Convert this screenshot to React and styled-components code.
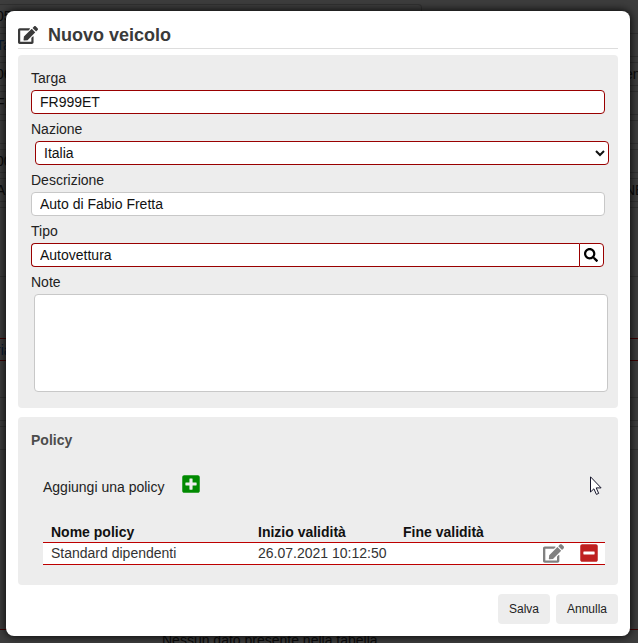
import styled, { createGlobalStyle, css } from "styled-components";
import { FaEdit, FaSearch, FaPlusSquare, FaMinusSquare } from "react-icons/fa";

const pageRows = [
  { height: 24, left: "05", short: true },
  { height: 24, left: "Ta", link: true },
  { height: 24, left: "06", right: "enti" },
  { height: 24, left: "FI" },
  { height: 24 },
  { height: 24, left: "00" },
  { height: 24, left: "AL", right: "NE" },
  { height: 70 },
  { height: 51, bare: true },
  { height: 23, left: "ria", link: true, required: true },
  { height: 26, bare: true },
  { height: 24 },
  { height: 24 },
  { height: 175, plain: true, required: true },
];

const policies = [
  { name: "Standard dipendenti", from: "26.07.2021 10:12:50", to: "" },
];

const Field = ({ label, children }) => (
  <FieldRow>
    <Label>{label}</Label>
    {children}
  </FieldRow>
);

const App = () => {
  const backgroundRows = pageRows.map((row, i) => (
    <PageRow
      key={i}
      $height={row.height}
      $plain={row.plain}
      $bare={row.bare}
      $short={row.short}
      $required={row.required}
      $link={row.link}
    >
      <span>{row.left}</span>
      <PageRight>{row.right}</PageRight>
    </PageRow>
  ));

  const policyRows = policies.map((item) => (
    <PolicyRow key={item.name}>
      <span>{item.name}</span>
      <span>{item.from}</span>
      <span>{item.to}</span>
      <Actions>
        <FaEdit size={21} color="#808080" />
        <FaMinusSquare size={20} color="#bf2020" />
      </Actions>
    </PolicyRow>
  ));

  return (
    <Screen>
      <GlobalStyle />
      <Page>
        {backgroundRows}
        <EmptyTable>Nessun dato presente nella tabella</EmptyTable>
      </Page>
      <Dialog>
        <Header>
          <FaEdit size={20} />
          <h1>Nuovo veicolo</h1>
        </Header>

        <Panel $height={353}>
          <Field label="Targa">
            <Input defaultValue="FR999ET" $required />
          </Field>
          <Field label="Nazione">
            <Select $required>
              <option>Italia</option>
            </Select>
          </Field>
          <Field label="Descrizione">
            <Input defaultValue="Auto di Fabio Fretta" />
          </Field>
          <Field label="Tipo">
            <SearchBox>
              <Input defaultValue="Autovettura" $required />
              <SearchButton>
                <FaSearch size={14} />
              </SearchButton>
            </SearchBox>
          </Field>
          <Field label="Note">
            <TextArea />
          </Field>
        </Panel>

        <Panel $height={168}>
          <h2>Policy</h2>
          <AddPolicy>
            <span>Aggiungi una policy</span>
            <FaPlusSquare size={20} color="#008a00" />
          </AddPolicy>
          <PolicyTable>
            <PolicyHead>
              <span>Nome policy</span>
              <span>Inizio validità</span>
              <span>Fine validità</span>
            </PolicyHead>
            {policyRows}
          </PolicyTable>
        </Panel>

        <Footer>
          <Button $width={52}>Salva</Button>
          <Button $width={62}>Annulla</Button>
        </Footer>
      </Dialog>
      <Cursor viewBox="0 0 12 19">
        <path d="M.5 .8V16l3.4-3.2 2.5 5.6 2.3-1-2.5-5.5h4.9z" fill="#fff" stroke="#15152a" />
      </Cursor>
    </Screen>
  );
};

export default App;

const GlobalStyle = createGlobalStyle`
  * {
    box-sizing: border-box;
  }

  body {
    margin: 0;
    overflow: hidden;
    background: #3d3d3d;
    font-family: "Liberation Sans", Arial, sans-serif;
    font-size: 14px;
  }
`;

const Screen = styled.div`
  display: flex;
  width: 638px;
  height: 643px;
  padding: 11px 8px 7px 6px;
  overflow: hidden;
`;

const Page = styled.div`
  position: absolute;
  inset: 0;
  display: flex;
  flex-direction: column;
  gap: 5px;
  padding-top: 4px;
  overflow: hidden;
  color: #0b0b0b;
`;

const PageRow = styled.div`
  display: flex;
  flex-shrink: 0;
  justify-content: space-between;
  width: ${(props) => (props.$short ? "426px" : "642px")};
  height: ${(props) => props.$height}px;
  margin-left: -4px;
  line-height: 22px;
  color: ${(props) => (props.$link ? "#071a33" : "#0b0b0b")};
  border: solid ${(props) => (props.$required ? "#3c0000" : "#313131")};
  border-width: ${(props) => (props.$bare ? "0" : props.$plain ? "0 0 1px" : "1px 0")};
  ${(props) => props.$short && "border-right-width: 1px; border-radius: 0 4px 4px 0;"}
`;

const PageRight = styled.span`
  width: 13px;
  color: #0b0b0b;
`;

const EmptyTable = styled.div`
  flex-shrink: 0;
  margin-top: -3px;
  padding-left: 162px;
  line-height: 17px;
`;

const Dialog = styled.div`
  position: relative;
  display: flex;
  flex-direction: column;
  width: 624px;
  height: 625px;
  padding: 12px;
  background: #fff;
  border-radius: 8px;
  box-shadow: 0 0 10px #000;
`;

const Header = styled.div`
  display: flex;
  align-items: center;
  gap: 10px;
  height: 26px;
  margin-bottom: 6px;
  padding-bottom: 2px;
  border-bottom: 1px solid #ddd;
  color: #3a3a3a;

  h1 {
    margin: 0;
    font-size: 18px;
    line-height: 22px;
  }
`;

const Panel = styled.div`
  flex-shrink: 0;
  height: ${(props) => props.$height}px;
  margin-bottom: 9px;
  padding: 13px;
  background: #ededed;
  border-radius: 4px;

  h2 {
    margin: 1px 0 0;
    font-size: 14px;
    line-height: 18px;
    color: #4c4c4c;
  }
`;

const FieldRow = styled.div`
  display: flex;
  flex-direction: column;
  height: 51px;
`;

const Label = styled.label`
  height: 22px;
  line-height: 20px;
  color: #222;
`;

const control = css`
  width: 574px;
  height: 24px;
  margin: 0;
  padding: 0 8px;
  background: #fff;
  border: 1px solid ${(props) => (props.$required ? "#990000" : "#c8c8c8")};
  border-radius: 4px;
  outline: none;
  font: inherit;
  color: #111;
`;

const Input = styled.input`
  ${control}
`;

const Select = styled.select`
  ${control}
  margin-left: 4px;
  padding: 0 2px 0 4px;
`;

const TextArea = styled.textarea`
  ${control}
  flex-shrink: 0;
  height: 98px;
  margin: 2px 0 0 3px;
  resize: none;
`;

const SearchBox = styled.div`
  display: flex;
  width: 573px;

  input {
    flex: 1;
    min-width: 0;
    border-right: 0;
    border-radius: 4px 0 0 4px;
  }
`;

const SearchButton = styled.button`
  display: flex;
  align-items: center;
  justify-content: center;
  width: 25px;
  height: 24px;
  padding: 0 1px 0 0;
  background: #fff;
  border: 1px solid #990000;
  border-radius: 0 4px 4px 0;
  color: #000;
`;

const AddPolicy = styled.div`
  display: flex;
  gap: 17px;
  height: 49px;
  margin: 25px 0 0 12px;
  color: #222;

  span {
    line-height: 26px;
  }
`;

const PolicyTable = styled.div`
  width: 562px;
  margin-left: 12px;
`;

const PolicyHead = styled.div`
  display: grid;
  grid-template-columns: 207px 145px 1fr 58px;
  height: 19px;
  padding-left: 8px;
  font-weight: bold;
  line-height: 18px;
  color: #111;
`;

const PolicyRow = styled.div`
  display: grid;
  grid-template-columns: 207px 145px 1fr 62px;
  height: 23px;
  padding-left: 8px;
  background: #fff;
  border: solid #bd0000;
  border-width: 1px 0;
  line-height: 20px;
  color: #333;
`;

const Actions = styled.div`
  display: flex;
  gap: 15px;
`;

const Footer = styled.div`
  display: flex;
  justify-content: flex-end;
  gap: 6px;
`;

const Button = styled.button`
  width: ${(props) => props.$width}px;
  height: 30px;
  padding: 0;
  background: #ededed;
  border: 0;
  border-radius: 4px;
  font-family: inherit;
  font-size: 12px;
  color: #222;
`;

const Cursor = styled.svg`
  position: absolute;
  left: 590px;
  top: 476px;
  width: 12px;
  height: 19px;
`;
